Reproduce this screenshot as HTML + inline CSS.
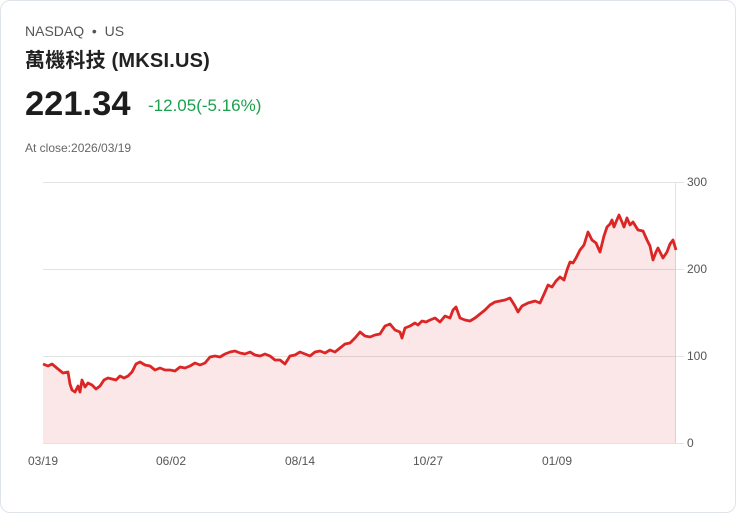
<!DOCTYPE html><html><head><meta charset="utf-8"><style>
body{margin:0;background:#fff;font-family:"Liberation Sans","Noto Sans CJK TC",sans-serif;}
.card{position:absolute;left:0;top:0;width:734px;height:511px;border:1px solid #dfe3ea;border-radius:10px;}
.t{position:absolute;white-space:nowrap;}
</style></head><body><div class="card"></div>
<div class="t" style="left:25px;top:23px;font-size:14px;color:#555;">NASDAQ &nbsp;•&nbsp; US</div>
<div class="t" style="left:25px;top:44px;font-size:20px;font-weight:bold;color:#222;letter-spacing:0.2px;">萬機科技 (MKSI.US)</div>
<div class="t" style="left:25px;top:85px;font-size:34.5px;font-weight:bold;color:#1d1d1d;">221.34</div>
<div class="t" style="left:148px;top:96px;font-size:17px;color:#1aa14c;">-12.05(-5.16%)</div>
<div class="t" style="left:25px;top:141px;font-size:12px;color:#666;">At close:2026/03/19</div>
<svg style="position:absolute;left:0;top:0" width="736" height="513">
<g stroke="#e3e3e3" stroke-width="1"><line x1="43" y1="182.5" x2="684" y2="182.5"/><line x1="43" y1="269.5" x2="684" y2="269.5"/><line x1="43" y1="356.5" x2="684" y2="356.5"/><line x1="43" y1="443.5" x2="684" y2="443.5"/><line x1="675.5" y1="182" x2="675.5" y2="443"/></g>
<g font-size="12" fill="#555" font-family="Liberation Sans"><text x="687" y="186">300</text><text x="687" y="273">200</text><text x="687" y="360">100</text><text x="687" y="447">0</text>
<text x="28" y="465">03/19</text><text x="156" y="465">06/02</text><text x="285" y="465">08/14</text><text x="413" y="465">10/27</text><text x="542" y="465">01/09</text></g>
<path d="M43,364 L48,366 52,364 58,369 63,373 68,372 70,384 72,390 75,392 78,386 80,392 82,380 85,387 88,383 92,385 96,389 100,386 104,380 108,378 112,379 116,380 120,376 124,378 128,376 132,372 136,364 140,362 145,365 150,366 155,370 160,368 165,370 170,370 175,371 180,367 185,368 190,366 195,363 200,365 205,363 210,357 215,356 220,357 225,354 230,352 235,351 240,353 245,354 250,352 255,355 260,356 265,354 270,356 275,360 280,360 285,364 290,356 295,355 300,352 305,354 310,356 315,352 320,351 325,353 330,350 335,352 340,348 345,344 350,343 355,338 360,332 365,336 370,337 375,335 380,334 385,326 390,324 395,330 400,332 402,338 405,328 410,326 415,323 418,325 422,321 426,322 430,320 435,318 440,322 445,316 450,318 453,310 456,307 460,318 465,320 470,321 475,318 480,314 485,310 490,305 495,302 500,301 505,300 510,298 515,306 518,312 522,306 528,303 535,301 540,303 545,292 548,285 552,287 556,281 560,277 564,280 567,270 570,262 573,263 576,258 580,250 584,245 588,232 592,240 596,243 600,252 604,236 607,227 610,224 612,220 614,227 616,222 619,215 622,222 624,227 627,218 630,225 633,222 638,230 643,231 647,240 650,246 653,260 656,252 658,248 661,254 663,258 667,252 670,244 673,240 676,250 L676,443 L43,443Z" fill="#dc2626" fill-opacity="0.11"/>
<path d="M43,364 L48,366 52,364 58,369 63,373 68,372 70,384 72,390 75,392 78,386 80,392 82,380 85,387 88,383 92,385 96,389 100,386 104,380 108,378 112,379 116,380 120,376 124,378 128,376 132,372 136,364 140,362 145,365 150,366 155,370 160,368 165,370 170,370 175,371 180,367 185,368 190,366 195,363 200,365 205,363 210,357 215,356 220,357 225,354 230,352 235,351 240,353 245,354 250,352 255,355 260,356 265,354 270,356 275,360 280,360 285,364 290,356 295,355 300,352 305,354 310,356 315,352 320,351 325,353 330,350 335,352 340,348 345,344 350,343 355,338 360,332 365,336 370,337 375,335 380,334 385,326 390,324 395,330 400,332 402,338 405,328 410,326 415,323 418,325 422,321 426,322 430,320 435,318 440,322 445,316 450,318 453,310 456,307 460,318 465,320 470,321 475,318 480,314 485,310 490,305 495,302 500,301 505,300 510,298 515,306 518,312 522,306 528,303 535,301 540,303 545,292 548,285 552,287 556,281 560,277 564,280 567,270 570,262 573,263 576,258 580,250 584,245 588,232 592,240 596,243 600,252 604,236 607,227 610,224 612,220 614,227 616,222 619,215 622,222 624,227 627,218 630,225 633,222 638,230 643,231 647,240 650,246 653,260 656,252 658,248 661,254 663,258 667,252 670,244 673,240 676,250" fill="none" stroke="#dc2626" stroke-width="2.8" stroke-linejoin="round"/>
</svg></body></html>
